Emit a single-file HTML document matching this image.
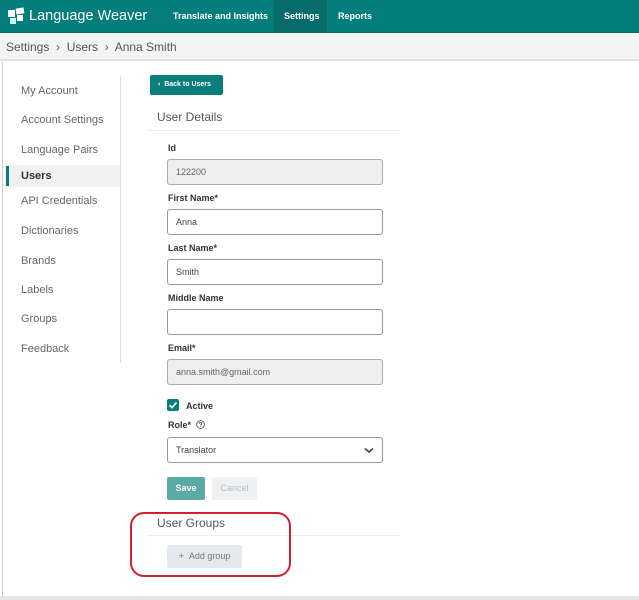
<!DOCTYPE html>
<html><head><meta charset="utf-8"><style>
*{margin:0;padding:0;box-sizing:border-box}
body{width:639px;height:600px;background:#fff;font-family:"Liberation Sans",sans-serif;position:relative;overflow:hidden;color:#333}
.a{position:absolute}
.hdr{left:0;top:0;width:639px;height:33px;background:#047e7c;border-bottom:1px solid #056b69}
.nav{color:#fff;font-size:9px;font-weight:bold;top:0;height:33px;line-height:33px;white-space:nowrap}
.bc{left:0;top:34px;width:639px;height:27px;background:#f4f4f4;border-bottom:2px solid #e2e2e2;font-size:12px;color:#555;line-height:27px;padding-left:6px}
.side{font-size:11px;color:#666;left:21px}
.lbl{left:168px;font-size:9px;font-weight:bold;color:#333}
.inp{left:167px;width:216px;height:26px;border:1px solid #999;border-radius:3px;font-size:9px;color:#444;line-height:24px;padding-left:8px;background:#fff}
.dis{background:#eee;border-color:#aaa;color:#666}
</style></head><body>
<div class="a hdr"></div>
<div class="a" style="left:274px;top:0;width:53px;height:33px;background:#066b69"></div>
<svg class="a" style="left:8px;top:7px" width="18" height="18" viewBox="0 0 18 18"><rect x="0" y="3" width="7" height="7" fill="#fff"/><rect x="8" y="1" width="8" height="6" fill="#fff" transform="rotate(-10 12 4)"/><rect x="2" y="11" width="6" height="6" fill="#cfe"/><rect x="9" y="8" width="6" height="6" fill="#fff"/></svg>
<div class="a" style="left:29px;top:7px;color:#fff;font-size:14.5px;line-height:18px;white-space:nowrap">Language Weaver</div>
<div class="a nav" style="left:173px">Translate and Insights</div>
<div class="a nav" style="left:284px">Settings</div>
<div class="a nav" style="left:338px">Reports</div>
<div class="a bc">Settings &nbsp;›&nbsp; Users &nbsp;›&nbsp; Anna Smith</div>
<div class="a" style="left:2px;top:62px;width:1px;height:538px;background:#ccc"></div>
<div class="a" style="left:120px;top:76px;width:1px;height:287px;background:#ddd"></div>
<div class="a" style="left:5px;top:165px;width:115px;height:22px;background:#f1f1f1"></div>
<div class="a" style="left:6px;top:166px;width:3px;height:20px;background:#0b7a78"></div>
<div class="a side" style="top:85px">My Account</div>
<div class="a side" style="top:114px">Account Settings</div>
<div class="a side" style="top:144px">Language Pairs</div>
<div class="a side" style="top:170px;font-weight:bold;color:#333">Users</div>
<div class="a side" style="top:195px">API Credentials</div>
<div class="a side" style="top:225px">Dictionaries</div>
<div class="a side" style="top:255px">Brands</div>
<div class="a side" style="top:284px">Labels</div>
<div class="a side" style="top:313px">Groups</div>
<div class="a side" style="top:343px">Feedback</div>
<div class="a" style="left:150px;top:75px;width:73px;height:20px;background:#0a7e7b;border-radius:2px;color:#fff;font-size:7px;font-weight:bold;line-height:20px;padding-left:8px">‹ &nbsp;Back to Users</div>
<div class="a" style="left:157px;top:110px;font-size:12px;color:#555">User Details</div>
<div class="a" style="left:148px;top:130px;width:252px;height:1px;background:#eee"></div>
<div class="a lbl" style="top:143px">Id</div>
<div class="a inp dis" style="top:159px">122200</div>
<div class="a lbl" style="top:193px">First Name*</div>
<div class="a inp" style="top:209px">Anna</div>
<div class="a lbl" style="top:243px">Last Name*</div>
<div class="a inp" style="top:259px">Smith</div>
<div class="a lbl" style="top:293px">Middle Name</div>
<div class="a inp" style="top:309px"></div>
<div class="a lbl" style="top:343px">Email*</div>
<div class="a inp dis" style="top:359px">anna.smith@gmail.com</div>
<svg class="a" style="left:167px;top:399px" width="12" height="12" viewBox="0 0 12 12"><rect width="12" height="12" rx="2" fill="#0a7e7b"/><path d="M2.5 6.2l2.4 2.4 4.6-5" stroke="#fff" stroke-width="1.6" fill="none"/></svg>
<div class="a lbl" style="left:186px;top:401px">Active</div>
<div class="a lbl" style="top:420px">Role* <svg width="9" height="9" viewBox="0 0 10 10" style="vertical-align:-1px;margin-left:2px"><circle cx="5" cy="5" r="4.3" fill="none" stroke="#444" stroke-width="0.9"/><path d="M3.6 3.8a1.4 1.4 0 1 1 1.9 1.3c-.4.2-.5.4-.5.9" fill="none" stroke="#444" stroke-width="0.9"/><circle cx="5" cy="7.5" r=".5" fill="#444"/></svg></div>
<div class="a inp" style="top:437px">Translator</div>
<svg class="a" style="left:364px;top:447px" width="10" height="7" viewBox="0 0 10 7"><path d="M1 1.5l4 3.5 4-3.5" stroke="#444" stroke-width="1.6" fill="none"/></svg>
<div class="a" style="left:167px;top:477px;width:38px;height:23px;background:#5aaaa6;border-radius:2px;color:#fff;font-size:9px;font-weight:bold;line-height:23px;text-align:center">Save</div>
<div class="a" style="left:212px;top:477px;width:45px;height:23px;background:#eef0f2;border-radius:2px;color:#bbb;font-size:9px;line-height:23px;text-align:center">Cancel</div>
<div class="a" style="left:157px;top:516px;font-size:12px;color:#555">User Groups</div>
<div class="a" style="left:148px;top:535px;width:252px;height:1px;background:#eee"></div>
<div class="a" style="left:167px;top:545px;width:75px;height:23px;background:#e6e9ec;border-radius:2px;color:#777;font-size:9px;line-height:23px;text-align:center">+ &nbsp;Add group</div>
<div class="a" style="left:130px;top:512px;width:161px;height:65px;border:2.5px solid #d0202f;border-radius:14px"></div>
<div class="a" style="left:0;top:596px;width:639px;height:4px;background:#e4e4e4"></div>
</body></html>
